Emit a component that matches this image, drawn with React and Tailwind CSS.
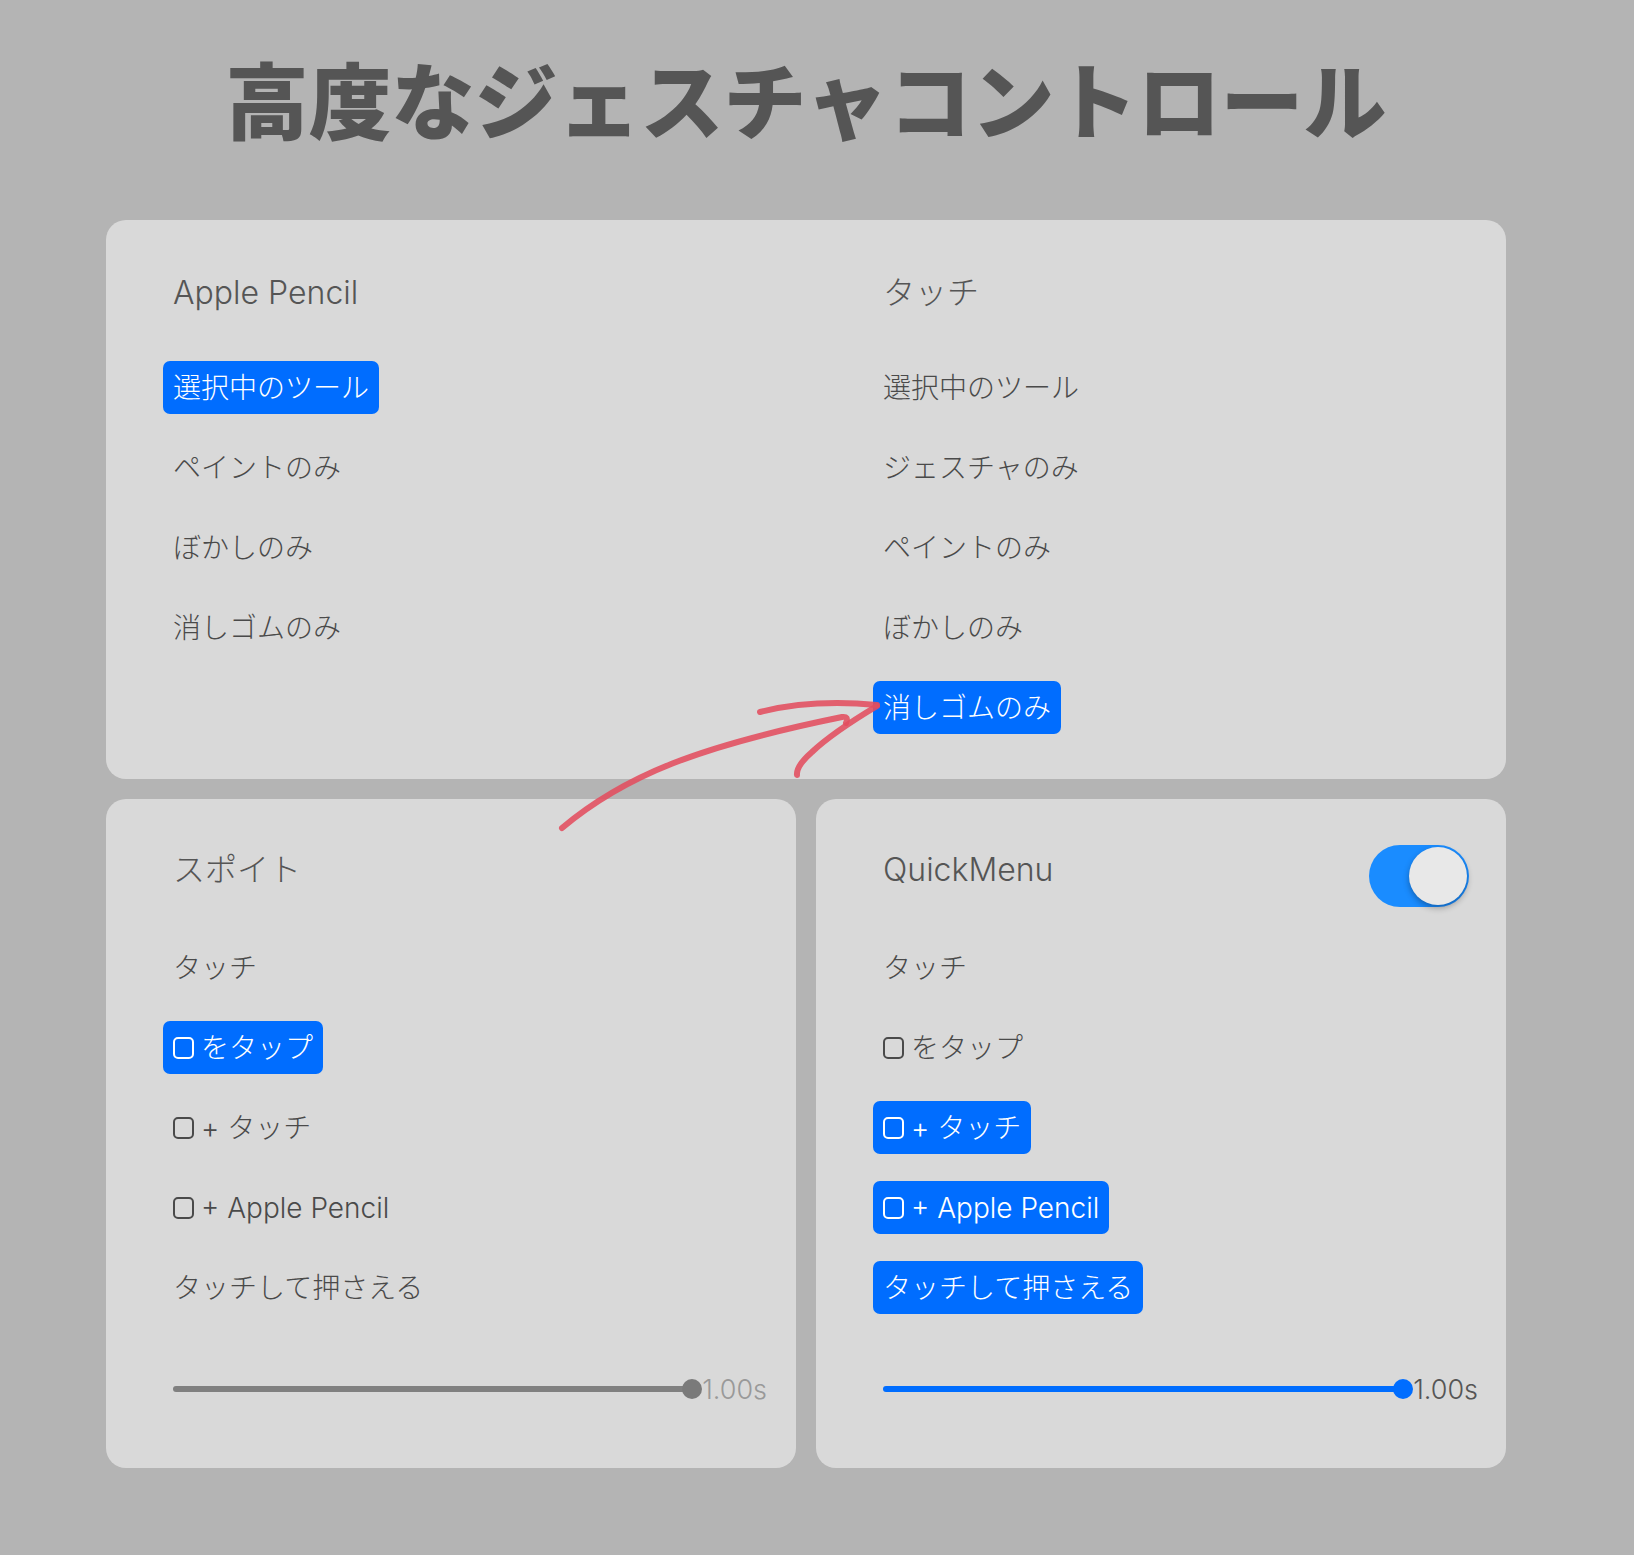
import React from 'react';

const pencilItems = [
  { label: '選択中のツール', sel: true },
  { label: 'ペイントのみ' },
  { label: 'ぼかしのみ' },
  { label: '消しゴムのみ' },
];

const touchItems = [
  { label: '選択中のツール' },
  { label: 'ジェスチャのみ' },
  { label: 'ペイントのみ' },
  { label: 'ぼかしのみ' },
  { label: '消しゴムのみ', sel: true },
];

const eyedropItems = [
  { label: 'タッチ' },
  { label: 'をタップ', square: true, sel: true },
  { label: '+ タッチ', square: true },
  { label: '+ Apple Pencil', square: true },
  { label: 'タッチして押さえる' },
];

const quickItems = [
  { label: 'タッチ' },
  { label: 'をタップ', square: true },
  { label: '+ タッチ', square: true, sel: true },
  { label: '+ Apple Pencil', square: true, sel: true },
  { label: 'タッチして押さえる', sel: true },
];

function Item({ label, sel, square }) {
  return (
    <div
      className={`h-[53px] flex items-center px-[10px] rounded-[7px] text-[28px] font-light whitespace-pre ${
        sel ? 'bg-[#006dff] text-white' : 'text-[#4a4a4a]'
      }`}
    >
      {square && (
        <span className="w-[28px] h-[53px] flex items-center shrink-0">
          <span className="w-[21px] h-[22px] rounded-[5px] border-2 border-current" />
        </span>
      )}
      {label}
    </div>
  );
}

function ItemList({ items }) {
  return (
    <div className="flex flex-col items-start gap-[27px]">
      {items.map((it, i) => (
        <Item key={i} {...it} />
      ))}
    </div>
  );
}

function Header({ children }) {
  return <div className="h-[40px] leading-[40px] text-[32px] font-light text-[#555] pl-[10px]">{children}</div>;
}

function Slider({ active }) {
  return (
    <div className="mt-[55px] h-[40px] flex items-center pl-[10px]">
      <div className={`flex-1 h-[6px] rounded-full ${active ? 'bg-[#006dff]' : 'bg-[#808080]'}`} />
      <div className={`w-[20px] h-[20px] rounded-full -ml-[10px] ${active ? 'bg-[#006dff]' : 'bg-[#7a7a7a]'}`} />
      <span className={`text-[27px] font-light leading-none ${active ? 'text-[#555]' : 'text-[#999]'}`}>1.00s</span>
    </div>
  );
}

export default function App() {
  return (
    <div className="relative w-[1634px] h-[1555px] bg-[#b4b4b4] overflow-hidden font-[Inter,'Noto_Sans_CJK_JP',sans-serif]">
      <div className="w-[1400px] ml-[106px] pt-[55px]">
        <h1 className="h-[84px] leading-[84px] text-center text-[83px] font-black text-[#555] font-['Noto_Sans_CJK_JP',sans-serif]">
          高度なジェスチャコントロール
        </h1>

        <div className="mt-[81px] bg-[#d9d9d9] rounded-[20px] grid grid-cols-2 gap-[20px] pt-[53px] pb-[45px]">
          <div className="pl-[57px]">
            <Header>Apple Pencil</Header>
            <div className="mt-[48px]">
              <ItemList items={pencilItems} />
            </div>
          </div>
          <div className="pl-[57px]">
            <Header>タッチ</Header>
            <div className="mt-[48px]">
              <ItemList items={touchItems} />
            </div>
          </div>
        </div>

        <div className="mt-[20px] grid grid-cols-2 gap-[20px]">
          <div className="bg-[#d9d9d9] rounded-[20px] pt-[51px] pb-[59px] pl-[57px] pr-[29px]">
            <Header>スポイト</Header>
            <div className="mt-[51px]">
              <ItemList items={eyedropItems} />
            </div>
            <Slider />
          </div>
          <div className="bg-[#d9d9d9] rounded-[20px] pt-[51px] pb-[59px] pl-[57px] pr-[28px]">
            <div className="h-[40px] flex items-start justify-between">
              <Header>QuickMenu</Header>
              <div className="-mt-[5px] mr-[9px] w-[100px] h-[62px] shrink-0 rounded-full bg-[#1a8cff] flex items-center justify-end p-[2px]">
                <div className="w-[58px] h-[58px] rounded-full bg-[#e8e8e8] shadow-[0_3px_6px_rgba(0,0,0,0.3)]" />
              </div>
            </div>
            <div className="mt-[51px]">
              <ItemList items={quickItems} />
            </div>
            <Slider active />
          </div>
        </div>
      </div>

      <svg
        className="absolute left-0 top-0 pointer-events-none"
        width="1634"
        height="1555"
        viewBox="0 0 1634 1555"
        fill="none"
        stroke="rgba(226,77,95,0.88)"
        strokeLinecap="round"
        strokeLinejoin="round"
      >
        <path d="M562 828 C 625 775, 700 746, 842 717 Q 849 716 846 723" strokeWidth="6" />
        <path d="M760 712 Q 812 699 877 705" strokeWidth="6" />
        <path d="M877 706 Q 832 733 812 752 Q 796 766 797 775" strokeWidth="6" />
      </svg>
    </div>
  );
}
